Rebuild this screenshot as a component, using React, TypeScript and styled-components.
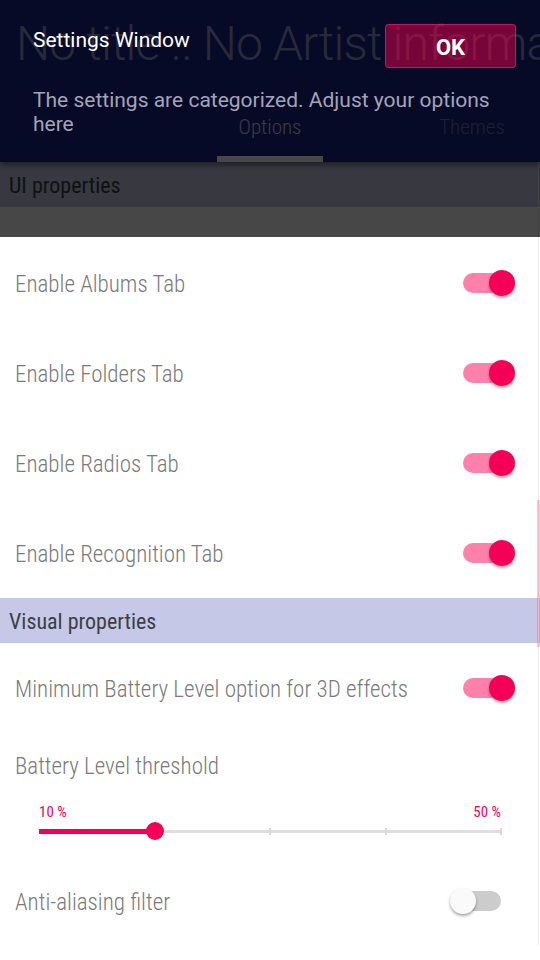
import React from "react";
import styled, { createGlobalStyle } from "styled-components";

const GlobalStyle = createGlobalStyle`
  html, body { margin: 0; padding: 0; background: #ffffff; }
  body { font-family: Roboto, "Noto Sans", sans-serif; }
  * { box-sizing: border-box; }
`;

const Screen = styled.div`
  position: relative;
  width: 540px;
  height: 960px;
  overflow: hidden;
  background: #ffffff;
  display: flex;
  flex-direction: column;
`;

const AppHeader = styled.header`
  position: relative;
  z-index: 2;
  height: 162px;
  flex-shrink: 0;
  background: #19248b;
  display: flex;
  flex-direction: column;
  box-shadow: 0 3px 6px rgba(0, 0, 0, 0.45);
`;

const NowPlaying = styled.div`
  padding: 14px 0 0 16px;
  height: 94px;
  font-family: Roboto, sans-serif;
  font-weight: 300;
  font-size: 48px;
  line-height: 60px;
  letter-spacing: -0.8px;
  color: #8f94cc;
  white-space: nowrap;
  overflow: hidden;
`;

const TabBar = styled.nav`
  flex: 1;
  display: flex;
  padding-left: 217px;
  gap: 96px;
`;

const Tab = styled.div<{ $active?: boolean }>`
  width: 106px;
  display: flex;
  flex-direction: column;
  align-items: center;
  justify-content: space-between;
  font-family: Roboto, sans-serif;
  font-stretch: 87.5%;
  font-weight: 300;
  font-size: 21px;
  color: ${(p) => (p.$active ? "#d0d3f0" : "#6e74b0")};
  &::after {
    content: "";
    align-self: stretch;
    height: 6px;
    background: ${(p) => (p.$active ? "#ffffff" : "transparent")};
  }
`;

const TabLabel = styled.span`
  padding-top: 21px;
`;

const Content = styled.main`
  position: relative;
  flex: 1;
  display: flex;
  flex-direction: column;
`;

const SectionHeader = styled.div`
  height: 45px;
  flex-shrink: 0;
  display: flex;
  align-items: center;
  padding: 2px 0 0 9px;
  background: #c5c9e7;
  font-family: Roboto, sans-serif;
  font-stretch: 87.5%;
  font-weight: 400;
  font-size: 22px;
  color: #3e3e44;
`;

const HiddenRowTail = styled.div`
  height: 31px;
  flex-shrink: 0;
  background: #ffffff;
`;

const Row = styled.div`
  height: 90px;
  flex-shrink: 0;
  display: flex;
  align-items: center;
  justify-content: space-between;
  padding: 2px 25px 0 15px;
`;

const RowLabel = styled.span`
  font-family: Roboto, sans-serif;
  font-stretch: 87.5%;
  font-weight: 300;
  font-size: 23px;
  color: #7a7a7a;
`;

const SwitchBox = styled.div<{ $on: boolean }>`
  position: relative;
  width: 65px;
  height: 26px;
  flex-shrink: 0;
  margin-top: -2px;
  &::before {
    content: "";
    position: absolute;
    left: 13px;
    top: 3px;
    width: 38px;
    height: 20px;
    border-radius: 10px;
    background: ${(p) => (p.$on ? "#ff80ab" : "#cccccc")};
  }
`;

const Thumb = styled.div<{ $on: boolean }>`
  position: absolute;
  top: 0;
  left: ${(p) => (p.$on ? "39px" : "0")};
  width: 26px;
  height: 26px;
  border-radius: 50%;
  background: ${(p) => (p.$on ? "#f50057" : "#fafafa")};
  box-shadow: 0 2px 3px rgba(0, 0, 0, 0.35);
`;

const Switch = ({ on }: { on: boolean }) => (
  <SwitchBox $on={on}>
    <Thumb $on={on} />
  </SwitchBox>
);

const SliderBlock = styled.div`
  height: 123px;
  flex-shrink: 0;
  display: flex;
  flex-direction: column;
  padding: 20px 39px 0 15px;
`;

const SliderLabels = styled.div`
  display: flex;
  justify-content: space-between;
  padding: 23px 0 0 24px;
  font-family: Roboto, sans-serif;
  font-stretch: 87.5%;
  font-size: 15px;
  color: #f50057;
`;

const Track = styled.div`
  position: relative;
  margin: 9px 0 0 24px;
  height: 3px;
  background: #dedede;
`;

const Fill = styled.div`
  position: absolute;
  left: 0;
  top: -1px;
  height: 5px;
  background: #f50057;
`;

const Tick = styled.div`
  position: absolute;
  top: -2px;
  width: 2px;
  height: 7px;
  margin-left: -1px;
  background: #d8d8d8;
`;

const SliderThumb = styled.div`
  position: absolute;
  top: -8px;
  width: 18px;
  height: 18px;
  margin-left: -9px;
  border-radius: 50%;
  background: #f50057;
`;

const ScrollTrack = styled.div`
  position: absolute;
  right: 1px;
  top: 0;
  bottom: 15px;
  width: 1px;
  background: #ececec;
`;

const ScrollThumb = styled.div`
  position: absolute;
  right: 0;
  top: 338px;
  width: 3px;
  height: 147px;
  background: rgba(245, 0, 87, 0.22);
`;

const Overlay = styled.div`
  position: absolute;
  z-index: 5;
  left: 0;
  top: 0;
  width: 540px;
  height: 237px;
  background: rgba(0, 0, 0, 0.72);
`;

const Showcase = styled.div`
  position: absolute;
  z-index: 6;
  left: 0;
  top: 0;
  width: 540px;
  padding: 24px 24px 0 33px;
  display: grid;
  grid-template-columns: 1fr 131px;
  column-gap: 20px;
  row-gap: 20px;
`;

const ShowcaseTitle = styled.h1`
  margin: 4px 0 0 0;
  font-family: Roboto, sans-serif;
  font-weight: 400;
  font-size: 21px;
  line-height: 24px;
  color: #ffffff;
`;

const OkButton = styled.button`
  height: 44px;
  border: 1px solid rgba(255, 40, 120, 0.55);
  border-radius: 4px;
  background: rgba(245, 0, 80, 0.48);
  color: #ffffff;
  font-family: Roboto, sans-serif;
  font-weight: 700;
  font-size: 22px;
  padding: 2px 0 0 0;
`;

const ShowcaseText = styled.p`
  grid-column: 1 / span 2;
  margin: 0;
  width: 470px;
  font-family: Roboto, sans-serif;
  font-weight: 400;
  font-size: 21px;
  line-height: 24px;
  color: #a3a4b8;
`;

const toggles = [
  "Enable Albums Tab",
  "Enable Folders Tab",
  "Enable Radios Tab",
  "Enable Recognition Tab",
];

export default function App() {
  const min = 10;
  const max = 50;
  const value = 20;
  const pct = ((value - min) / (max - min)) * 100;
  return (
    <>
      <GlobalStyle />
      <Screen>
        <AppHeader>
          <NowPlaying>No title .. No Artist information</NowPlaying>
          <TabBar>
            <Tab $active>
              <TabLabel>Options</TabLabel>
            </Tab>
            <Tab>
              <TabLabel>Themes</TabLabel>
            </Tab>
          </TabBar>
        </AppHeader>
        <Content>
          <SectionHeader>UI properties</SectionHeader>
          <HiddenRowTail />
          {toggles.map((t) => (
            <Row key={t}>
              <RowLabel>{t}</RowLabel>
              <Switch on />
            </Row>
          ))}
          <SectionHeader>Visual properties</SectionHeader>
          <Row>
            <RowLabel>Minimum Battery Level option for 3D effects</RowLabel>
            <Switch on />
          </Row>
          <SliderBlock>
            <RowLabel>Battery Level threshold</RowLabel>
            <SliderLabels>
              <span>10 %</span>
              <span>50 %</span>
            </SliderLabels>
            <Track>
              <Fill style={{ width: `${pct}%` }} />
              {[50, 75, 100].map((p) => (
                <Tick key={p} style={{ left: `${p}%` }} />
              ))}
              <SliderThumb style={{ left: `${pct}%` }} />
            </Track>
          </SliderBlock>
          <Row>
            <RowLabel>Anti-aliasing filter</RowLabel>
            <Switch on={false} />
          </Row>
          <ScrollTrack />
          <ScrollThumb />
        </Content>
        <Overlay />
        <Showcase>
          <ShowcaseTitle>Settings Window</ShowcaseTitle>
          <OkButton>OK</OkButton>
          <ShowcaseText>
            The settings are categorized. Adjust your options here
          </ShowcaseText>
        </Showcase>
      </Screen>
    </>
  );
}
